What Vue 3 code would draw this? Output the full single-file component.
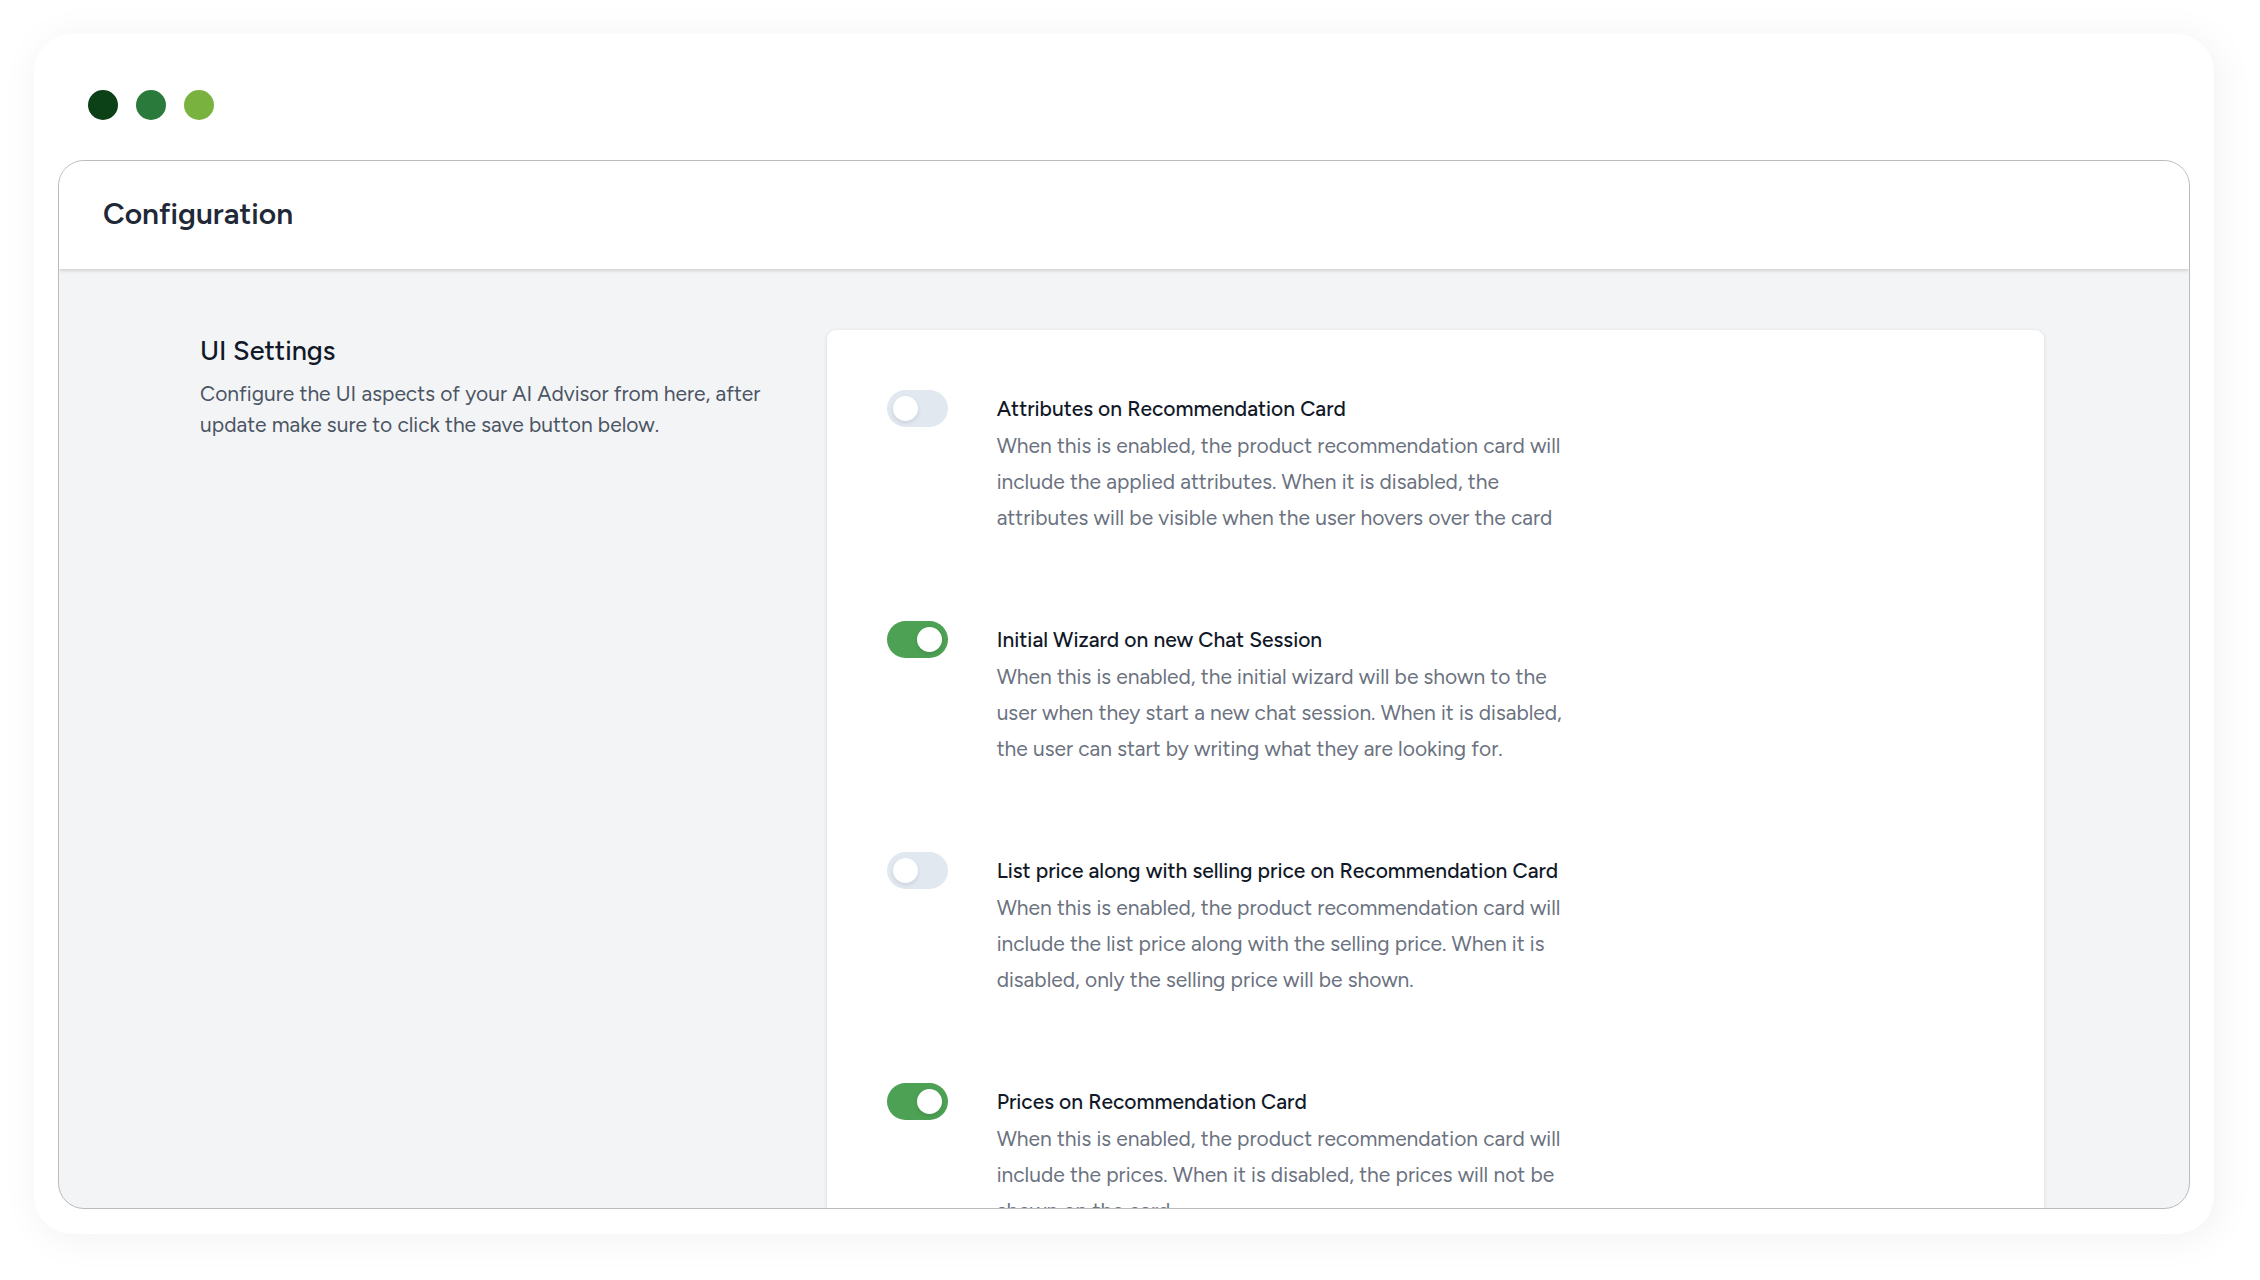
<script setup>
import { ref } from 'vue'

const settings = ref([
  {
    id: 'attributes',
    enabled: false,
    title: 'Attributes on Recommendation Card',
    lines: [
      'When this is enabled, the product recommendation card will',
      'include the applied attributes. When it is disabled, the',
      'attributes will be visible when the user hovers over the card',
    ],
  },
  {
    id: 'wizard',
    enabled: true,
    title: 'Initial Wizard on new Chat Session',
    lines: [
      'When this is enabled, the initial wizard will be shown to the',
      'user when they start a new chat session. When it is disabled,',
      'the user can start by writing what they are looking for.',
    ],
  },
  {
    id: 'list-price',
    enabled: false,
    title: 'List price along with selling price on Recommendation Card',
    lines: [
      'When this is enabled, the product recommendation card will',
      'include the list price along with the selling price. When it is',
      'disabled, only the selling price will be shown.',
    ],
  },
  {
    id: 'prices',
    enabled: true,
    title: 'Prices on Recommendation Card',
    lines: [
      'When this is enabled, the product recommendation card will',
      'include the prices. When it is disabled, the prices will not be',
      'shown on the card.',
    ],
  },
])
</script>

<template>
  <div class="window">
    <div class="dots">
      <span class="dot dark"></span>
      <span class="dot mid"></span>
      <span class="dot light"></span>
    </div>
    <div class="panel">
      <header class="header">
        <h1>Configuration</h1>
      </header>
      <main class="content">
        <section class="intro">
          <h2>UI Settings</h2>
          <p>Configure the UI aspects of your AI Advisor from here, after<br />update make sure to click the save button below.</p>
        </section>
        <form class="card" @submit.prevent>
          <div v-for="s in settings" :key="s.id" class="row">
            <input :id="s.id" v-model="s.enabled" type="checkbox" role="switch" class="toggle" :aria-describedby="s.id + '-text'" />
            <div>
              <label :for="s.id">{{ s.title }}</label>
              <p :id="s.id + '-text'">{{ s.lines.join('\n') }}</p>
            </div>
          </div>
        </form>
      </main>
    </div>
  </div>
</template>

<style>
body {
  background: #fff;
}
</style>

<style scoped>
* {
  box-sizing: border-box;
}

h1,
h2,
p {
  margin: 0;
}

.window {
  display: flex;
  flex-direction: column;
  height: calc(100vh - 80px);
  margin: 34px 46px 46px 34px;
  padding: 0 24px 25px;
  border-radius: 38px;
  background: #fff;
  box-shadow: 4px 4px 40px rgba(0, 0, 0, 0.06);
  font-family: Figtree, Lato, sans-serif;
}

.dots {
  display: flex;
  gap: 18px;
  padding: 56px 30px 40px;
}

.dot {
  width: 30px;
  height: 30px;
  border-radius: 50%;
}

.dark {
  background: #0c4016;
}

.mid {
  background: #2a7a3b;
}

.light {
  background: #7ab23f;
}

.panel {
  display: flex;
  flex: 1;
  flex-direction: column;
  min-height: 0;
  overflow: hidden;
  border: 1px solid #bbb;
  border-radius: 26px;
  background: #f3f4f6;
}

.header {
  flex: none;
  padding: 33px 44px 35px;
  background: #fff;
  box-shadow: 0 1px 4px rgba(0, 0, 0, 0.2);
}

h1 {
  color: #1f2937;
  font-size: 30px;
  font-weight: 600;
  line-height: 40px;
}

.content {
  display: grid;
  grid-template-columns: repeat(3, 1fr);
  gap: 36px;
  padding: 61px 145px 61px 141px;
}

h2 {
  color: #111827;
  font-size: 27px;
  font-weight: 500;
  line-height: 42px;
}

.intro p {
  margin-top: 6px;
  color: #4b5563;
  font-size: 21px;
  line-height: 31px;
  white-space: nowrap;
}

.card {
  display: flex;
  grid-column: span 2;
  flex-direction: column;
  gap: 85px;
  padding: 60px;
  border-radius: 9px;
  background: #fff;
  box-shadow: 0 1px 4px rgba(0, 0, 0, 0.12);
}

.row {
  display: flex;
  gap: 49px;
}

.toggle {
  flex: none;
  width: 61px;
  height: 37px;
  margin: 0;
  padding: 6px;
  border-radius: 19px;
  appearance: none;
  background: #e2e8f0;
  cursor: pointer;
}

.toggle::before {
  display: block;
  width: 25px;
  height: 25px;
  border-radius: 50%;
  background: #fff;
  box-shadow: 0 2px 4px rgba(0, 0, 0, 0.1);
  content: '';
}

.toggle:checked {
  background: #4ca154;
}

.toggle:checked::before {
  margin-left: auto;
}

.row label {
  display: block;
  color: #111827;
  font-size: 21px;
  font-weight: 500;
  line-height: 38px;
}

.row p {
  color: #6b7280;
  font-size: 21px;
  line-height: 36px;
  white-space: pre;
}
</style>
